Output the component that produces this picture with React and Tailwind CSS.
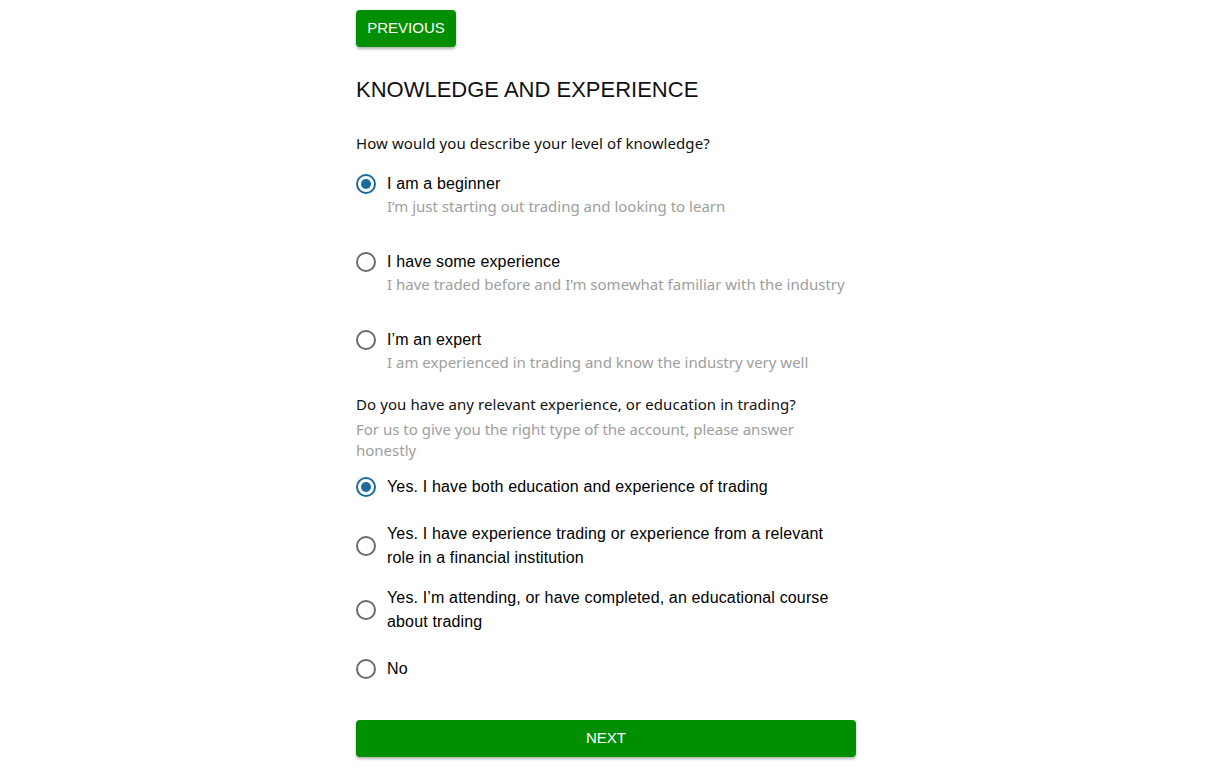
import React from "react";

const arial = { fontFamily: '"Liberation Sans", Arial, sans-serif' };
const seg = { fontFamily: '"Noto Sans", "Open Sans", sans-serif' };

function Radio({ checked }) {
  return (
    <span className={`flex h-5 w-5 shrink-0 items-center justify-center rounded-full border-2 ${checked ? "border-[#1b6a9d]" : "border-[#6b6b6b]"}`}>
      {checked && <span className="h-[10px] w-[10px] rounded-full bg-[#1b6a9d]" />}
    </span>
  );
}

function Option({ checked, label, desc }) {
  return (
    <div className="flex items-start">
      <div className="flex h-6 items-center">
        <Radio checked={checked} />
      </div>
      <div className="ml-[11px]">
        <div className="text-[16px] leading-6 tracking-[0.15px] text-black" style={arial}>{label}</div>
        {desc && <div className="text-[15px] leading-[21px] text-[#9e9e9e]" style={seg}>{desc}</div>}
      </div>
    </div>
  );
}

function OptionCenter({ checked, label }) {
  return (
    <div className="flex min-h-[54px] items-center py-2">
      <Radio checked={checked} />
      <div className="ml-[11px] text-[16px] leading-6 tracking-[0.15px] text-black" style={arial}>{label}</div>
    </div>
  );
}

export default function App() {
  return (
    <div className="min-h-[778px] bg-white pr-[2px]">
      <div className="mx-auto w-[500px] pt-[10px]">
        <button className="h-[37px] w-[100px] rounded bg-[#008f00] text-[15px] text-white shadow-[0_2px_3px_rgba(0,0,0,0.3)]" style={arial}>PREVIOUS</button>
        <h1 className="mt-[29px] text-[22px] leading-7 text-[#111]" style={arial}>KNOWLEDGE AND EXPERIENCE</h1>
        <p className="mt-[27px] text-[15px] leading-6 tracking-[0.08px] text-[#111]" style={seg}>How would you describe your level of knowledge?</p>
        <div className="mt-[17px] flex flex-col gap-[33px]">
          <Option checked label="I am a beginner" desc="I’m just starting out trading and looking to learn" />
          <Option label="I have some experience" desc="I have traded before and I’m somewhat familiar with the industry" />
          <Option label="I’m an expert" desc="I am experienced in trading and know the industry very well" />
        </div>
        <p className="mt-[19px] text-[15px] leading-6 tracking-[0.08px] text-[#111]" style={seg}>Do you have any relevant experience, or education in trading?</p>
        <p className="mt-[3px] pr-[40px] text-[15px] leading-[21px] text-[#9e9e9e]" style={seg}>For us to give you the right type of the account, please answer honestly</p>
        <div className="-mt-[1px] flex flex-col">
          <OptionCenter checked label="Yes. I have both education and experience of trading" />
          <OptionCenter label={<>Yes. I have experience trading or experience from a relevant<br />role in a financial institution</>} />
          <OptionCenter label={<>Yes. I’m attending, or have completed, an educational course<br />about trading</>} />
          <OptionCenter label="No" />
        </div>
        <button className="mt-[24px] h-[37px] w-full rounded bg-[#008f00] text-[15px] text-white shadow-[0_2px_3px_rgba(0,0,0,0.3)]" style={arial}>NEXT</button>
      </div>
    </div>
  );
}
